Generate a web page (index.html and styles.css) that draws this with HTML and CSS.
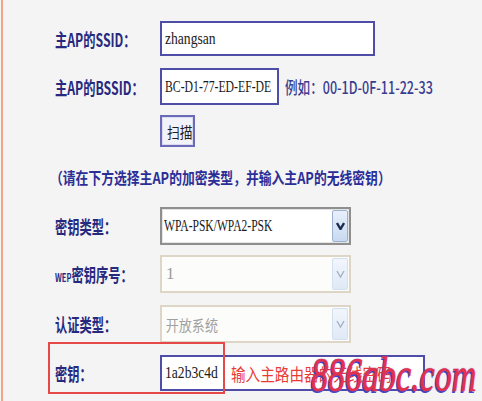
FILE: index.html
```html
<!DOCTYPE html>
<html>
<head>
<meta charset="utf-8">
<link rel="stylesheet" href="styles.css">
</head>
<body>
<div class="page">
  <div class="form">
    <div class="row h35">
      <div class="lbl"><span class="sq lbl-t">主AP的SSID：</span></div>
      <div class="inp w-ssid"><span class="sq val v-ssid">zhangsan</span></div>
    </div>
    <div class="row h37 gap12">
      <div class="lbl"><span class="sq lbl-t">主AP的BSSID：</span></div>
      <div class="inp w-bssid"><span class="sq val v-bssid">BC-D1-77-ED-EF-DE</span></div>
      <div class="hint"><span class="sq hint-t">例如：00-1D-0F-11-22-33</span></div>
    </div>
    <div class="row h32 gap10">
      <div class="lbl"></div>
      <div class="btn"><span class="sq btn-t">扫描</span></div>
    </div>
    <div class="note"><span class="sq note-t">（请在下方选择主AP的加密类型，并输入主AP的无线密钥）</span></div>
    <div class="row h38">
      <div class="lbl"><span class="sq lbl-t">密钥类型：</span></div>
      <div class="sel">
        <div class="sel-txt"><span class="sq val v-sel">WPA-PSK/WPA2-PSK</span></div>
        <div class="sel-btn"><svg width="9" height="8" viewBox="0 0 9 8"><polyline points="1,1 4.5,7 8,1" fill="none" stroke="#1f2c52" stroke-width="2.4"/></svg></div>
      </div>
    </div>
    <div class="row h38 gap10">
      <div class="lbl"><span class="sq lbl-t"><span class="small">WEP</span>密钥序号：</span></div>
      <div class="sel dis">
        <div class="sel-txt"><span class="sq val v-dis">1</span></div>
        <div class="sel-btn"><svg width="9" height="8" viewBox="0 0 9 8"><polyline points="1,1 4.5,7 8,1" fill="none" stroke="#a3b0c6" stroke-width="1.4"/></svg></div>
      </div>
    </div>
    <div class="row h38 gap12">
      <div class="lbl"><span class="sq lbl-t">认证类型：</span></div>
      <div class="sel dis">
        <div class="sel-txt"><span class="sq val v-cn">开放系统</span></div>
        <div class="sel-btn"><svg width="9" height="8" viewBox="0 0 9 8"><polyline points="1,1 4.5,7 8,1" fill="none" stroke="#a3b0c6" stroke-width="1.4"/></svg></div>
      </div>
    </div>
    <div class="row h36 gap12 key-row">
      <div class="lbl"><span class="sq lbl-t">密钥：</span></div>
      <div class="inp w-key">
        <span class="sq val v-key">1a2b3c4d</span>
        <span class="sq red-t">输入主路由器的无线密码</span>
      </div>
      <div class="highlight"></div>
    </div>
  </div>
  <div class="watermark">886abc.com</div>
</div>
</body>
</html>
```
FILE: styles.css
```css
html, body {
  margin: 0;
  padding: 0;
}
body {
  width: 482px;
  height: 401px;
  overflow: hidden;
  background: #f4f4f4;
}
.page {
  position: relative;
  height: 401px;
  margin-left: 1px;
  border-left: 2px solid #f2a486;
  padding-left: 52px;
  box-sizing: border-box;
}
.form {
  display: flex;
  flex-direction: column;
  padding-top: 21px;
}
.row {
  display: flex;
  align-items: center;
  position: relative;
}
.h35 { height: 35px; }
.h37 { height: 37px; }
.h32 { height: 32px; }
.h38 { height: 38px; }
.h36 { height: 36px; }
.gap12 { margin-top: 12px; }
.gap10 { margin-top: 10px; }

.sq {
  display: inline-block;
  white-space: nowrap;
  transform-origin: left center;
}
.lbl {
  width: 105px;
  flex: none;
  height: 100%;
  display: flex;
  align-items: center;
}
.lbl-t {
  font-family: "Noto Sans CJK SC", sans-serif;
  font-weight: 700;
  font-size: 18px;
  color: #27297e;
  transform: scaleX(0.68);
}
.small {
  font-size: 11px;
}
.inp {
  box-sizing: border-box;
  height: 100%;
  border: 2px solid #4e4ea8;
  background: #fff;
  display: flex;
  align-items: center;
  padding-left: 3px;
  flex: none;
}
.w-ssid { width: 215px; }
.w-bssid { width: 119px; }
.w-key { width: 265px; }
.val {
  font-family: "Liberation Serif", serif;
  font-size: 17px;
  color: #1a1a1a;
}
.v-ssid { transform: scaleX(0.8); }
.v-bssid { transform: scaleX(0.69); }
.v-sel { transform: scaleX(0.68); }
.v-key { transform: scaleX(0.8); width: 66px; }
.v-dis { color: #9a9a9a; padding-left: 2px; }
.v-cn {
  font-family: "Noto Sans CJK SC", sans-serif;
  font-size: 15px;
  color: #a0a0a0;
  transform: scaleX(0.87);
  padding-left: 2px;
}
.red-t {
  font-family: "Noto Sans CJK SC", sans-serif;
  font-size: 17px;
  color: #ea3a34;
  transform: scaleX(0.86);
}
.hint {
  margin-left: 6px;
}
.hint-t {
  font-family: "Noto Sans CJK SC", "Liberation Sans", sans-serif;
  font-weight: 500;
  font-size: 17px;
  color: #3a3c90;
  transform: scaleX(0.74);
}
.btn {
  box-sizing: border-box;
  width: 35px;
  height: 32px;
  border: 2px solid #6a6ab8;
  background: #f2f2fa;
  box-shadow: inset 0 0 0 1px #dcdcee;
  display: flex;
  align-items: center;
  padding-left: 5px;
}
.btn-t {
  font-family: "Noto Sans CJK SC", sans-serif;
  font-size: 15px;
  color: #1e1e1e;
  transform: scaleX(0.85);
}
.note {
  height: 60px;
  display: flex;
  align-items: center;
  margin-left: -5px;
}
.note-t {
  font-family: "Noto Sans CJK SC", sans-serif;
  font-weight: 700;
  font-size: 16px;
  color: #2c2e98;
  transform: scaleX(0.8);
}
.sel {
  box-sizing: border-box;
  width: 191px;
  height: 100%;
  border: 2px solid #8f8f8f;
  box-shadow: inset 0 0 0 1px #e4e4e4;
  background: #fff;
  display: flex;
}
.sel.dis {
  border-color: #ddd6c6;
  box-shadow: none;
  background: #fcfcfa;
}
.sel-txt {
  flex: 1;
  display: flex;
  align-items: center;
  padding-left: 2px;
}
.sel-btn {
  width: 16px;
  margin: 1px;
  box-sizing: border-box;
  border: 1px solid #9db2cf;
  background: linear-gradient(#e8f0fb, #c8daf0);
  display: flex;
  align-items: center;
  justify-content: center;
  border-radius: 2px;
}
.sel.dis .sel-btn {
  border-color: #d3e0f0;
  background: linear-gradient(#f2f6fc, #dfe9f6);
}
.highlight {
  position: absolute;
  left: -7px;
  top: -13px;
  width: 177px;
  height: 52px;
  box-sizing: border-box;
  border: 2px solid #e64848;
  pointer-events: none;
}
.watermark {
  position: absolute;
  left: 308px;
  top: 366px;
  height: 34px;
  line-height: 34px;
  white-space: nowrap;
  font-family: "Liberation Serif", serif;
  font-style: italic;
  font-size: 34px;
  color: #e2304e;
  -webkit-text-stroke: 0.5px #e2304e;
  text-shadow: -1px 1px 0 #3c48c8, 0 0 1px #3c48c8;
  transform: scaleY(1.45);
  transform-origin: left bottom;
}
```
